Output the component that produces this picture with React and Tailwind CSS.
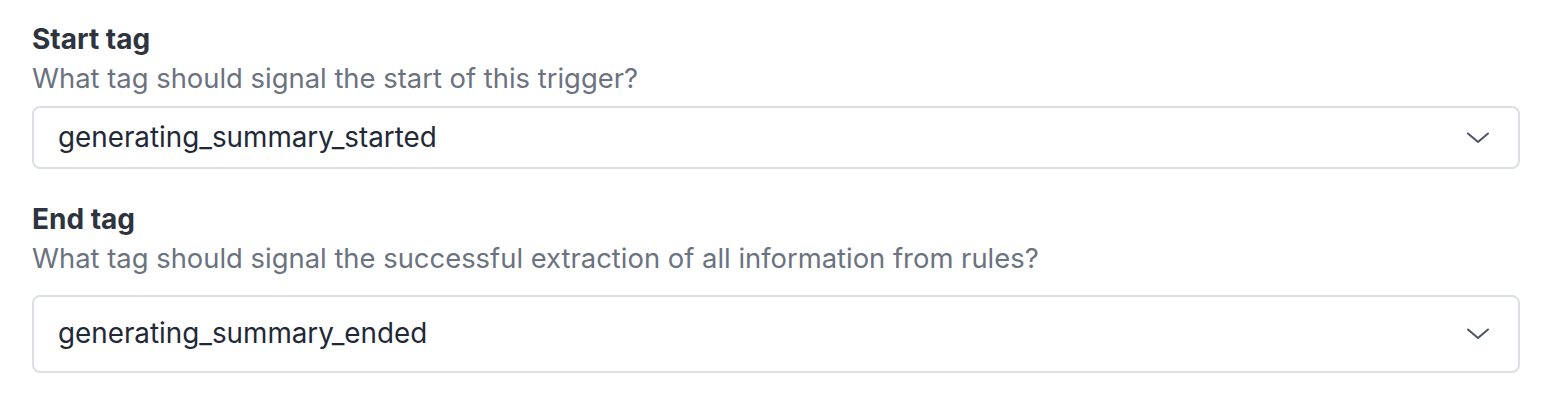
import React from "react";

const Chevron = () => (
  <svg width="24" height="12" viewBox="0 0 24 12" fill="none" className="shrink-0">
    <path d="M2 1.5 L12 10 L22 1.5" stroke="#4b5563" strokeWidth="2" strokeLinecap="round" strokeLinejoin="round" />
  </svg>
);

const TagSelect = ({ value, height }) => (
  <div
    className={`flex items-center justify-between w-full rounded-[8px] border-2 border-[#dcdfe4] bg-white pl-[24px] pr-[28px] ${height}`}
  >
    <span className="text-[27.8px] text-[#1f2937]">{value}</span>
    <Chevron />
  </div>
);

const Field = ({ label, hint, value, height, gap }) => (
  <div className="flex flex-col">
    <label className="text-[28px] leading-[36px] font-bold text-[#2d3440]">{label}</label>
    <p className="mt-[3px] text-[27.4px] leading-[36px] text-[#6b7280]">{hint}</p>
    <div className={gap}>
      <TagSelect value={value} height={height} />
    </div>
  </div>
);

export default function App() {
  return (
    <div className="min-h-screen bg-white font-['Inter',sans-serif]">
      <div className="flex flex-col gap-[32px] pt-[21px] pl-[32px] pr-[36px]">
        {/* Start tag */}
        <Field
          label="Start tag"
          hint="What tag should signal the start of this trigger?"
          value="generating_summary_started"
          height="h-[63px]"
          gap="mt-[10px]"
        />

        {/* End tag */}
        <Field
          label="End tag"
          hint="What tag should signal the successful extraction of all information from rules?"
          value="generating_summary_ended"
          height="h-[78px]"
          gap="mt-[19px]"
        />
      </div>
    </div>
  );
}
